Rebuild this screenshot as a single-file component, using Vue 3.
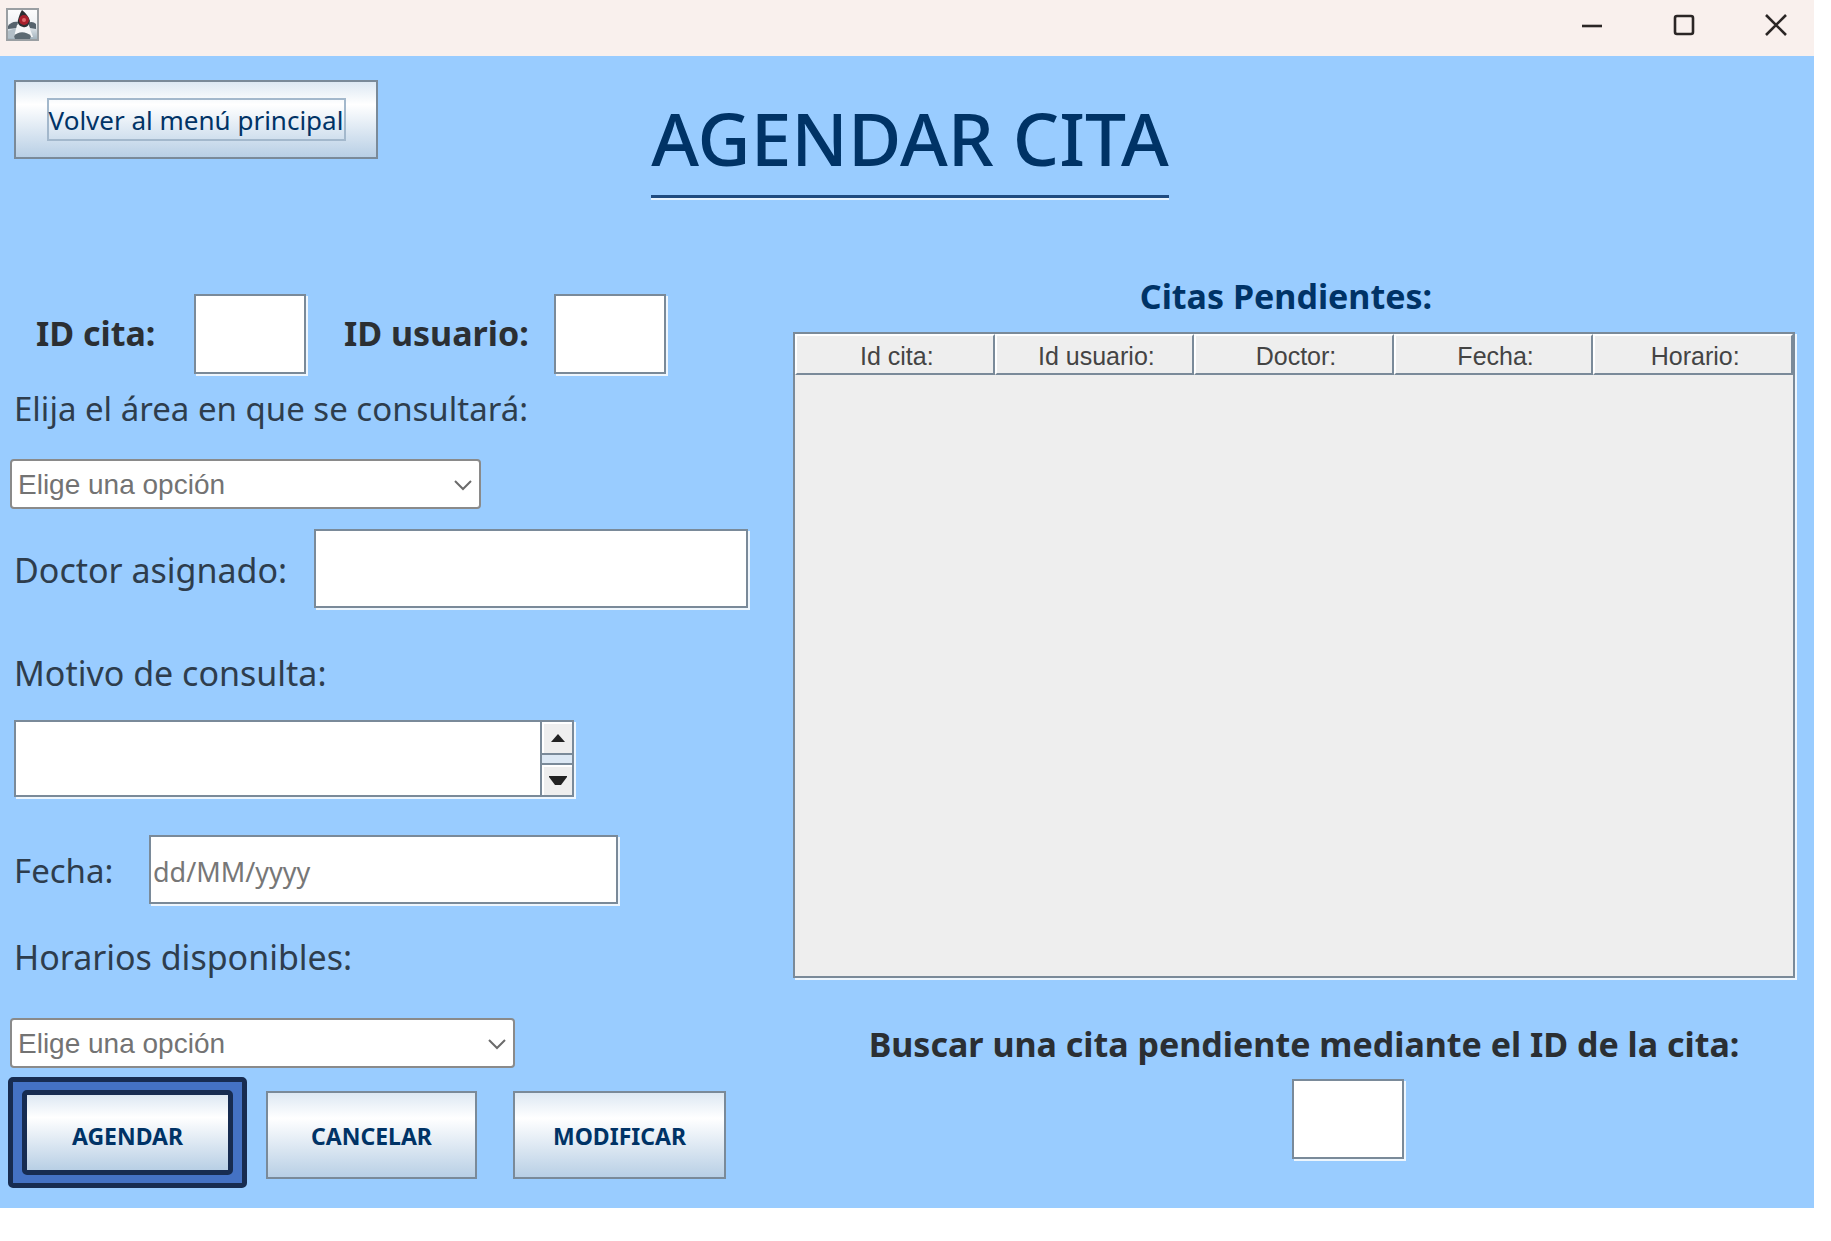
<script setup>
import { ref } from 'vue'

const idCita = ref('')
const idUsuario = ref('')
const area = ref('')
const doctor = ref('')
const motivo = ref('')
const fecha = ref('')
const horario = ref('')
const busqueda = ref('')

const columnas = ['Id cita:', 'Id usuario:', 'Doctor:', 'Fecha:', 'Horario:']
</script>

<template>
  <div class="window">
    <header class="titlebar">
      <svg class="app-icon" viewBox="0 0 33 33" aria-hidden="true">
        <defs>
          <linearGradient id="tile" x1="0" y1="0" x2="0" y2="1">
            <stop offset="0" stop-color="#fdfdfd" />
            <stop offset="0.5" stop-color="#eef1f4" />
            <stop offset="1" stop-color="#9fb0bb" />
          </linearGradient>
        </defs>
        <rect x="1" y="1" width="31" height="31" fill="url(#tile)" stroke="#9a9fa3" stroke-width="2" />
        <path d="M2 18c2-3 6-5 10-4l-1 6-9 1z" fill="#56636d" />
        <path d="M22 15c3-2 6-1 8 1v5l-6-1z" fill="#56636d" />
        <path d="M2 23l8-3-1 10H2z" fill="#b3bfc7" />
        <path d="M11 17l11-1 5 13H8z" fill="#f5f6f7" />
        <path d="M16 2c4 3 7 7 8 11-1 4-3 7-7 6-4-1-6-4-5-7 1-4 2-7 4-10z" fill="#2c3033" />
        <circle cx="18" cy="12" r="5" fill="#a8202c" />
        <circle cx="18" cy="12" r="2" fill="#e0686c" />
        <path d="M8 28c4-5 12-5 17 0l-1 3H9z" fill="#5d6a72" />
      </svg>
      <div class="controls">
        <button type="button" aria-label="Minimizar">
          <svg viewBox="0 0 24 24"><path d="M2 13h20" /></svg>
        </button>
        <button type="button" aria-label="Maximizar">
          <svg viewBox="0 0 24 24"><rect x="3" y="3" width="18" height="18" rx="2" /></svg>
        </button>
        <button type="button" aria-label="Cerrar">
          <svg viewBox="0 0 24 24"><path d="M2 2l20 20M22 2L2 22" /></svg>
        </button>
      </div>
    </header>

    <main class="content">
      <div class="heading">
        <button type="button" class="btn back"><span>Volver al menú principal</span></button>
        <h1>AGENDAR CITA</h1>
      </div>

      <div class="columns">
        <form class="form" @submit.prevent>
          <div class="row ids">
            <label for="id-cita" class="bold">ID cita:</label>
            <input id="id-cita" v-model="idCita" class="field small" type="text" />
            <label for="id-usuario" class="bold second">ID usuario:</label>
            <input id="id-usuario" v-model="idUsuario" class="field small" type="text" />
          </div>

          <label for="area" class="line compact">Elija el área en que se consultará:</label>
          <div class="combo area">
            <select id="area" v-model="area">
              <option value="">Elige una opción</option>
            </select>
            <svg viewBox="0 0 18 12" aria-hidden="true"><path d="M1 2l8 8 8-8" /></svg>
          </div>

          <div class="row doctor">
            <label for="doctor">Doctor asignado:</label>
            <input id="doctor" v-model="doctor" class="field" type="text" />
          </div>

          <label for="motivo" class="line reason">Motivo de consulta:</label>
          <div class="field scroll">
            <textarea id="motivo" v-model="motivo"></textarea>
            <div class="scrollbar">
              <button type="button" aria-label="Subir">
                <svg viewBox="0 0 18 10"><path d="M9 1l7 8H2z" /></svg>
              </button>
              <div class="thumb"></div>
              <button type="button" aria-label="Bajar">
                <svg viewBox="0 0 18 10"><path d="M0 0h18v1l-6 8H6L0 1z" /></svg>
              </button>
            </div>
          </div>

          <div class="row date">
            <label for="fecha" class="compact">Fecha:</label>
            <input id="fecha" v-model="fecha" class="field" type="text" placeholder="dd/MM/yyyy" />
          </div>

          <label for="horario" class="line hours">Horarios disponibles:</label>
          <div class="combo schedule">
            <select id="horario" v-model="horario">
              <option value="">Elige una opción</option>
            </select>
            <svg viewBox="0 0 18 12" aria-hidden="true"><path d="M1 2l8 8 8-8" /></svg>
          </div>

          <div class="actions">
            <div class="highlight">
              <button type="submit" class="btn action">AGENDAR</button>
            </div>
            <button type="button" class="btn action">CANCELAR</button>
            <button type="button" class="btn action last">MODIFICAR</button>
          </div>
        </form>

        <section class="pending">
          <h2>Citas Pendientes:</h2>
          <div class="field grid">
            <table>
              <thead>
                <tr>
                  <th v-for="c in columnas" :key="c" scope="col">{{ c }}</th>
                </tr>
              </thead>
              <tbody></tbody>
            </table>
          </div>
          <div class="search">
            <label for="buscar" class="bold">Buscar una cita pendiente mediante el ID de la cita:</label>
            <input id="buscar" v-model="busqueda" class="field small" type="text" />
          </div>
        </section>
      </div>
    </main>
  </div>
</template>

<style>
body {
  background: #fff;
}
</style>

<style scoped>
.window,
.window * {
  box-sizing: border-box;
}
.window {
  margin-right: 17px;
  font-family: "Noto Sans", "Open Sans", sans-serif;
  color: #333;
}
button,
input,
select,
textarea {
  margin: 0;
  padding: 0;
  border: 0;
  border-radius: 0;
  outline: none;
  font-family: inherit;
}
.titlebar {
  display: flex;
  justify-content: space-between;
  align-items: center;
  height: 56px;
  padding: 0 8px 7px 6px;
  background: #f9f0ed;
}
.app-icon {
  width: 33px;
  height: 33px;
}
.controls {
  display: flex;
  gap: 32px;
}
.controls button {
  display: flex;
  align-items: center;
  justify-content: center;
  width: 60px;
  height: 48px;
  background: none;
}
.controls svg {
  width: 24px;
  height: 24px;
  fill: none;
  stroke: #2b2625;
  stroke-width: 2.6;
}
.content {
  background: #9cf;
  padding: 24px 0 20px;
}
.heading {
  display: grid;
  grid-template-columns: 1fr auto 1fr;
  align-items: start;
  padding: 0 8px 0 14px;
}
.btn {
  border: 2px solid #7a8a99;
  background: linear-gradient(#dde8f3, #fff 30%, #b8cfe5);
  color: #036;
}
.back {
  justify-self: start;
  width: 364px;
  height: 79px;
  font-size: 26px;
}
.back span {
  display: block;
  width: 299px;
  height: 43px;
  margin: 0 auto;
  border: 2px solid #a3b8cc;
  line-height: 40px;
  white-space: nowrap;
}
h1 {
  margin: 18px 0 0;
  padding-bottom: 17px;
  border-bottom: 3px solid #1f4b80;
  box-shadow: 0 2px 0 #e8f3fd;
  color: #036;
  font-size: 73px;
  font-weight: 500;
  line-height: 80px;
}
.columns {
  display: grid;
  grid-template-columns: 793fr 1004fr;
  margin-top: 78px;
  padding-right: 17px;
}
.form {
  padding-top: 18px;
}
label {
  font-size: 34px;
  line-height: 40px;
  color: #2e3d4d;
  white-space: nowrap;
}
.bold {
  color: #2b2f33;
  font-weight: 700;
}
.compact {
  font-size: 33px;
}
.line {
  display: block;
  margin-left: 14px;
}
.row {
  display: flex;
  align-items: center;
  margin-left: 14px;
}
.field {
  margin: 0 2px 2px 0;
  border: 2px solid #7a8a99;
  box-shadow: 2px 2px 0 #eef6fd;
  background: #fff;
  font-size: 27px;
}
.small {
  width: 112px;
  height: 80px;
}
.ids {
  margin: 0 0 13px 36px;
}
.ids label {
  width: 158px;
  padding-bottom: 4px;
}
.ids .second {
  width: 210px;
  margin-left: 36px;
}
.combo {
  position: relative;
  height: 50px;
  margin-left: 10px;
}
.combo select {
  appearance: none;
  width: 100%;
  height: 100%;
  padding: 0 40px 0 6px;
  border: 2px solid #8a8a8a;
  border-radius: 4px;
  background: #fff;
  color: #737373;
  font-family: "Liberation Sans", Arial, sans-serif;
  font-size: 28px;
}
.combo svg {
  position: absolute;
  right: 9px;
  top: 20px;
  width: 18px;
  height: 12px;
  fill: none;
  stroke: #6b6b6b;
  stroke-width: 2;
  pointer-events: none;
}
.area {
  width: 471px;
  margin-top: 30px;
  margin-bottom: 20px;
}
.schedule {
  width: 505px;
  margin-top: 41px;
  margin-bottom: 9px;
}
.doctor label {
  width: 300px;
}
.doctor input {
  width: 434px;
  height: 79px;
}
.reason {
  margin-top: 43px;
}
.scroll {
  display: flex;
  width: 560px;
  height: 77px;
  margin: 27px 0 38px 14px;
}
.scroll textarea {
  flex: 1;
  resize: none;
  overflow: hidden;
  background: #fff;
  font-size: 27px;
}
.scrollbar {
  display: flex;
  flex-direction: column;
  width: 32px;
  border-left: 2px solid #7a8a99;
}
.scrollbar button {
  flex: 1;
  display: flex;
  align-items: center;
  justify-content: center;
  border-top: 2px solid #fff;
  border-left: 2px solid #fff;
  background: #eee;
}
.scrollbar svg {
  width: 18px;
  height: 10px;
  fill: #222;
}
.thumb {
  height: 12px;
  border: solid #7a8a99;
  border-width: 2px 0;
  background: #dce8f4;
}
.date label {
  width: 135px;
}
.date input {
  width: 469px;
  height: 69px;
  padding: 4px 0 0 2px;
}
.date input::placeholder {
  color: #777;
  opacity: 1;
}
.hours {
  margin-top: 31px;
}
.actions {
  display: flex;
  align-items: center;
  margin-left: 8px;
}
.action {
  width: 211px;
  height: 88px;
  margin: 5px 0 0 19px;
  padding-top: 2px;
  font-size: 23px;
  font-weight: 700;
}
.last {
  width: 213px;
  margin-left: 36px;
}
.highlight {
  padding: 8px 9px;
  border: 5px solid #172c51;
  border-radius: 5px;
  background: #4472c4;
}
.highlight .action {
  display: block;
  height: 85px;
  margin: 0;
  padding-top: 6px;
  border: 5px solid #172c51;
  border-radius: 5px;
}
.pending h2 {
  margin: 0 0 16px;
  padding-right: 18px;
  color: #036;
  font-size: 34px;
  line-height: 40px;
  text-align: center;
}
.grid {
  height: 646px;
  background: #eee;
}
table {
  width: 100%;
  border-collapse: separate;
  border-spacing: 0;
  table-layout: fixed;
}
th {
  height: 41px;
  padding: 3px 0 0 4px;
  border: 2px solid #fff;
  border-right-color: #7a8a99;
  border-bottom-color: #7a8a99;
  color: #444;
  font-family: "Liberation Sans", Arial, sans-serif;
  font-size: 25px;
  font-weight: 400;
  line-height: 32px;
}
.search {
  display: flex;
  flex-direction: column;
  align-items: center;
  gap: 15px;
  margin-top: 46px;
}
.search label {
  margin-left: 18px;
}
.search input {
  margin-left: 108px;
}
</style>
